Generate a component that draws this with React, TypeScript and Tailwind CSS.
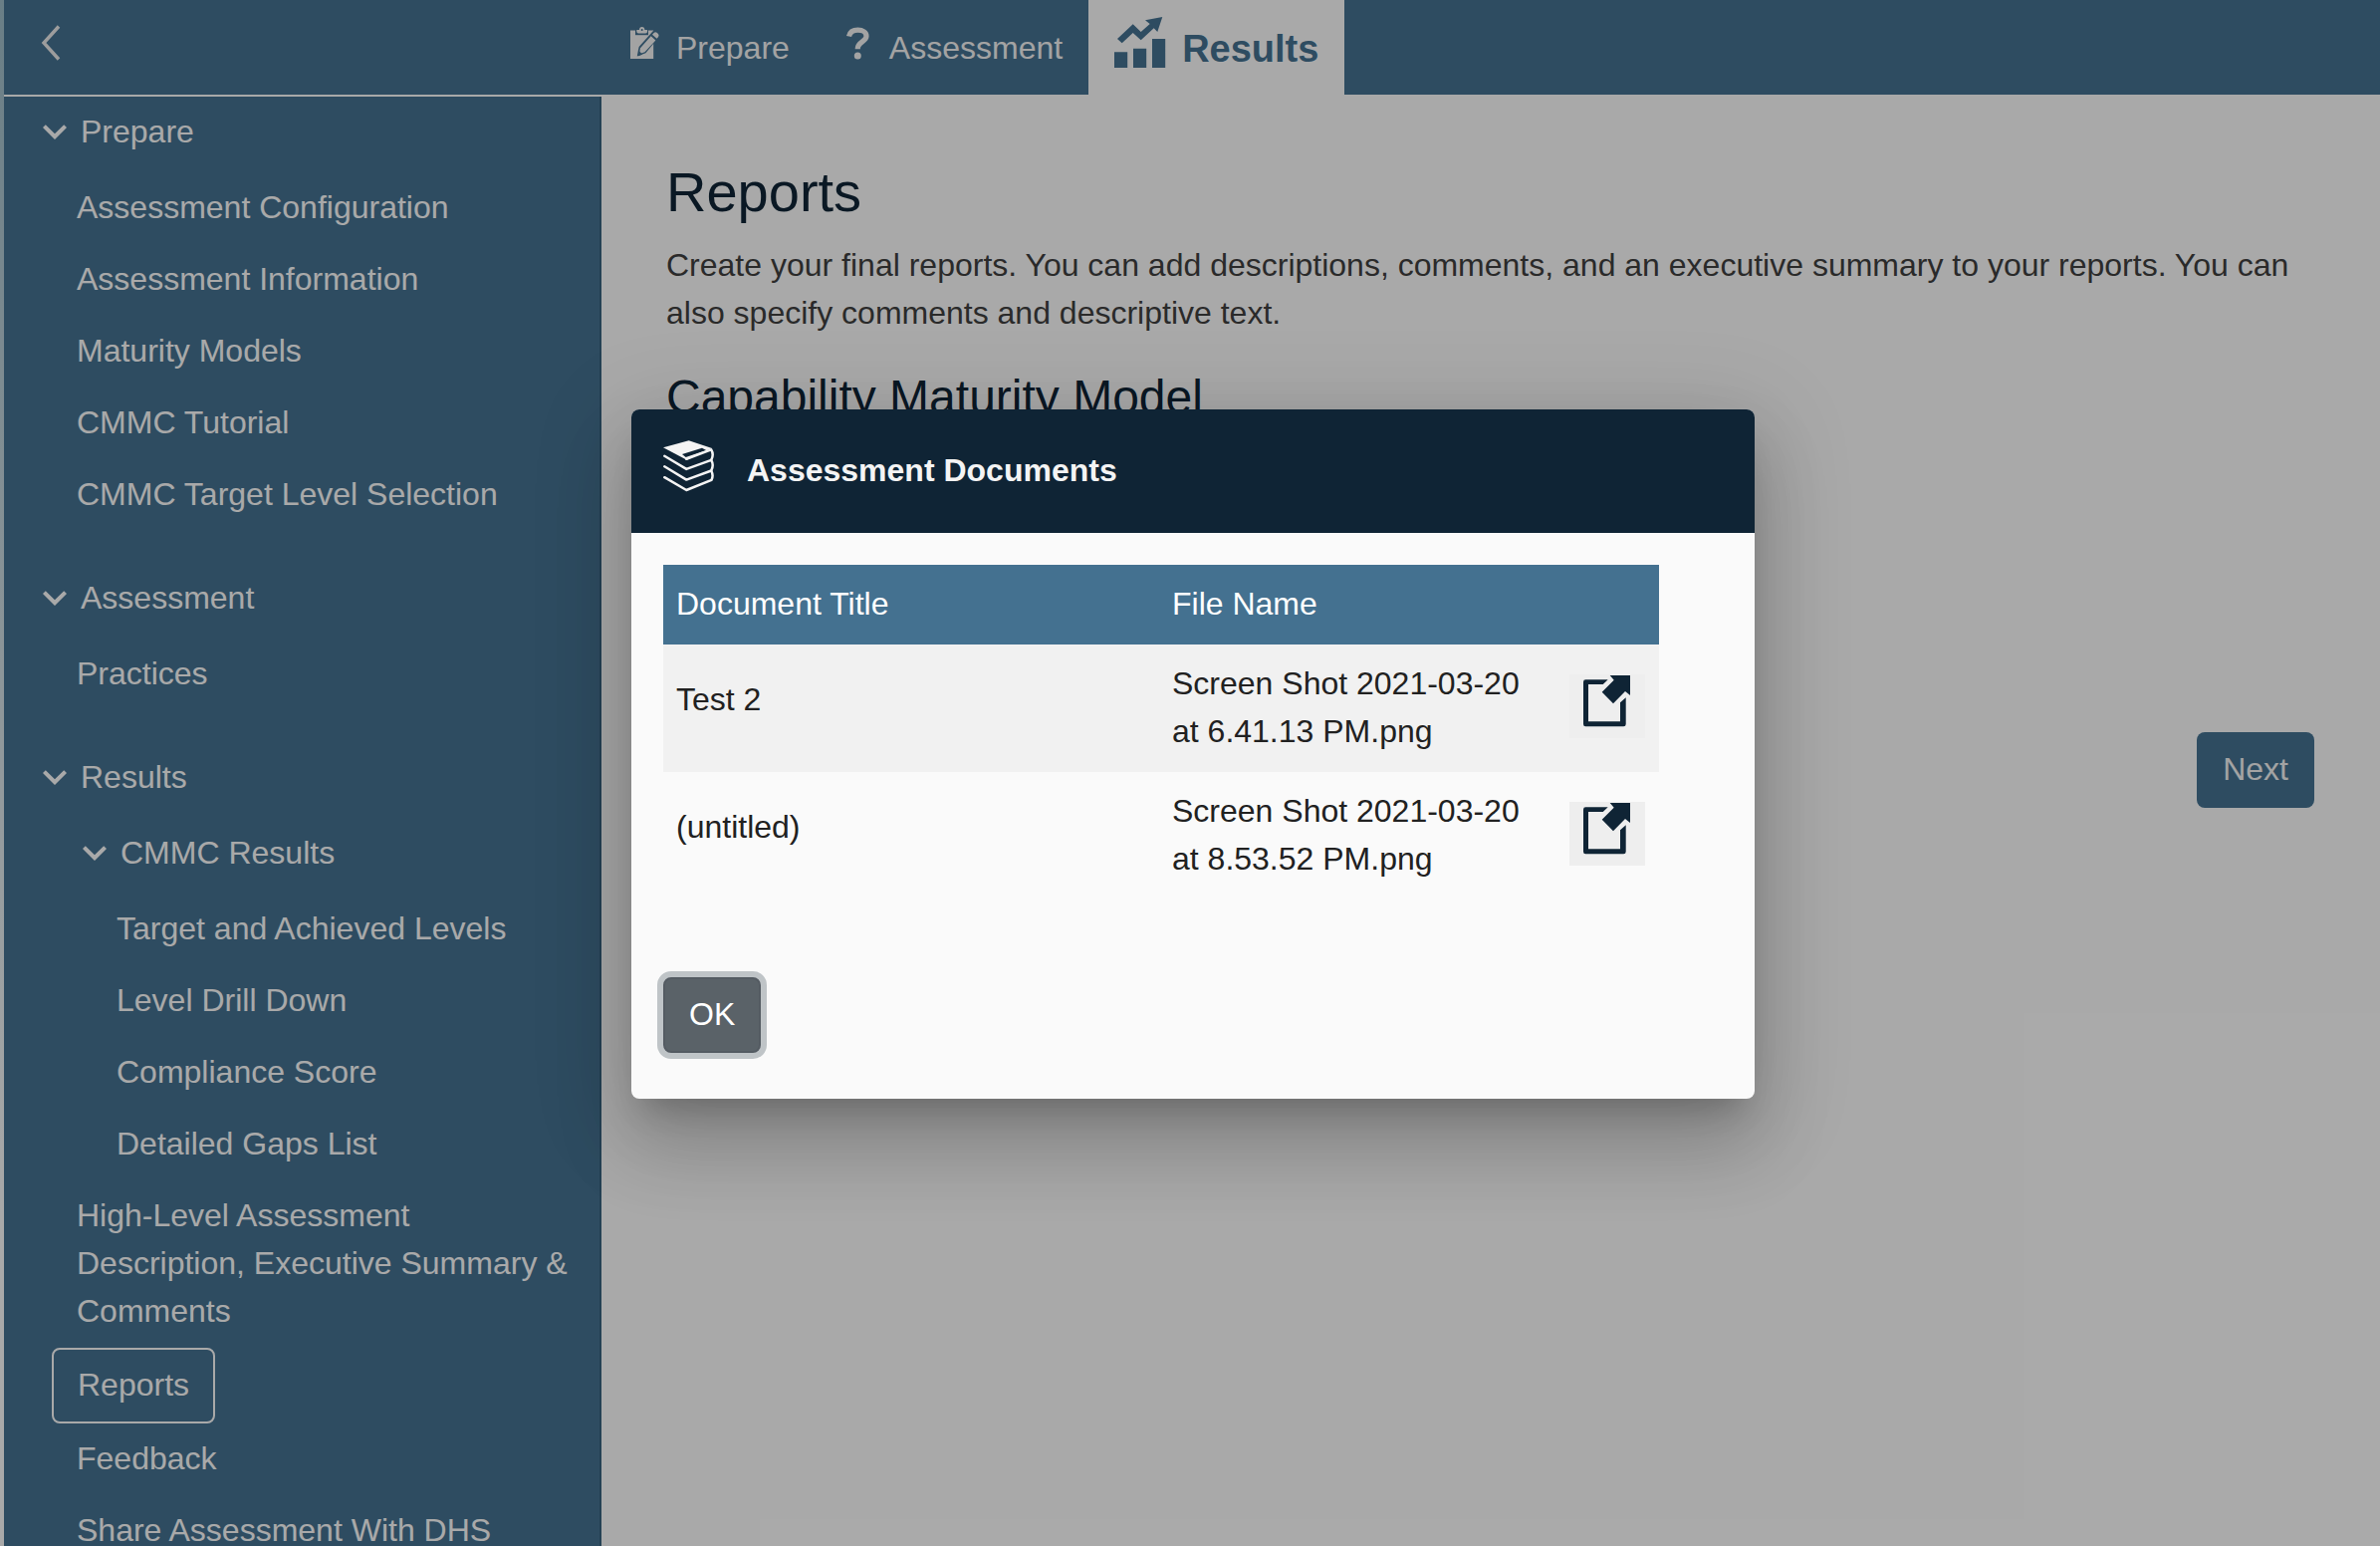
import type { ReactNode } from "react";

function BackIcon() {
  return (
    <svg className="h-9 w-6" viewBox="0 0 24 36" fill="none" stroke="currentColor" strokeWidth="3.4">
      <path d="M21 1.5 6 18 21 34.500" />
    </svg>
  );
}

function ChevronIcon() {
  return (
    <svg className="size-12 shrink-0" viewBox="0 0 24 24" fill="currentColor">
      <path d="M16.590 8.590 12 13.170 7.410 8.590 6 10l6 6 6-6z" />
    </svg>
  );
}

function ClipboardIcon() {
  return (
    <svg className="h-[33px] w-[30px]" viewBox="0 0 30 33">
      <path d="M0 3.500H23.200V32H0z" fill="currentColor" />
      <path d="M5 2h13v6.200H5z" fill="#447190" />
      <path d="M6.300 3H9a2.700 3 0 0 1 5.400 0h2.700v1.600q0 2-2 2H8.300q-2 0-2-2z" fill="currentColor" />
      <circle cx="11.700" cy="2.900" r="1" fill="#447190" />
      <path d="M6.800 29.500 8.600 20 22.500 4.500q2-2 4.600-.2l1.500 1.500q2 2 .2 4.200L15.400 26.200z" fill="#447190" />
      <path d="M8.800 27.300 10 21.200 20.700 9.200l4.700 4.200L14.500 25.200zM22 7.700l1.600-1.800q1.500-1.300 3-.2l1.400 1.300q1.200 1.400.1 2.900l-1.500 1.800z" fill="currentColor" />
      <path d="M8 28.800l1-4 2.700 2.600z" fill="#447190" stroke="#447190" strokeWidth="0.800" />
    </svg>
  );
}

function QuestionIcon() {
  return (
    <svg className="h-[33px] w-8" viewBox="0 0 32 33" fill="none">
      <path
        d="M7.500 9.500C8.500 5 12 3.200 16.500 3.200c5 0 8.500 2.300 8.500 6 0 5.500-8.700 6-8.700 12.300v.7"
        stroke="currentColor"
        strokeWidth="5.200"
      />
      <circle cx="16.300" cy="29" r="3.500" fill="currentColor" />
    </svg>
  );
}

function ChartIcon() {
  return (
    <svg className="size-[52px]" viewBox="0 0 52 52" fill="currentColor">
      <path d="M0 35.300h13.200V51H0zM19 31.800h13.200V51H19zM38 22h13.200v29H38z" />
      <path d="M3 22 18.700 7.300l8 7.700 9-8L31 3.300 48.300 0l-5 15-3.600-3.700-13 12L18.700 16l-11 10.300z" />
    </svg>
  );
}

function BooksIcon() {
  return (
    <svg className="size-[52px]" viewBox="0 0 52 52" fill="none" stroke="currentColor" strokeWidth="2.500" strokeLinecap="round" strokeLinejoin="round">
      <path d="M0 7.200 25.700.3 49 8 23.700 19.700z" fill="currentColor" stroke="none" />
      <path d="m19 14 3.700 3 20.500-7-4.200-2.300z" fill="#0f2435" stroke="none" />
      <path d="M23.300 18.800 48.200 9.300q3 5 0 10.600l-24.900 9L1.300 15.800" />
      <path d="M48.200 19.900q3 5 0 10.600l-24.900 9.100L1.300 26.300" />
      <path d="M48.200 30.500q2.600 5 .3 9.300L23.300 50 1.300 37.200" />
    </svg>
  );
}

function OpenIcon() {
  return (
    <svg className="h-[52px] w-12" viewBox="0 0 48 52" fill="currentColor">
      <path d="M24.700 4.300H2.300Q0 4.300 0 6.700V49q0 2.300 2.300 2.300h38Q42.700 51.300 42.700 49V22.300L37 27.200v19.100H5V9h14.700z" />
      <path d="M26.700 0H47v20l-5-4-12 12.300-11.300-11.600 12-12z" />
    </svg>
  );
}

function Tab({ icon, label }: { icon: ReactNode; label: string }) {
  return (
    <button className="flex h-[95px] items-center gap-4 px-[26px] text-[#f0f0f0]">
      <span className="pb-2">{icon}</span>
      {label}
    </button>
  );
}

function GroupHead({ label }: { label: string }) {
  return (
    <button className="flex items-center gap-0.5 pt-[11px] pb-[17px] pl-[27px] text-left">
      <ChevronIcon />
      {label}
    </button>
  );
}

function Item({ label }: { label: string }) {
  return (
    <a href="#" className="block pt-[11px] pr-4 pb-[13px] pl-[73px]">
      {label}
    </a>
  );
}

const prepareItems = [
  "Assessment Configuration",
  "Assessment Information",
  "Maturity Models",
  "CMMC Tutorial",
  "CMMC Target Level Selection",
];
const cmmcItems = ["Target and Achieved Levels", "Level Drill Down", "Compliance Score", "Detailed Gaps List"];

const documents = [
  { title: "Test 2", file: "Screen Shot 2021-03-20 at 6.41.13 PM.png" },
  { title: "(untitled)", file: "Screen Shot 2021-03-20 at 8.53.52 PM.png" },
];

function Sidebar() {
  return (
    <nav className="mt-0.5 w-[600px] shrink-0 overflow-hidden border-r-2 border-[#37607d] bg-[#447190]">
      <GroupHead label="Prepare" />
      {prepareItems.map((label) => (
        <Item key={label} label={label} />
      ))}
      <div className="mt-8">
        <GroupHead label="Assessment" />
        <Item label="Practices" />
      </div>
      <div className="mt-8">
        <GroupHead label="Results" />
        <div className="pl-10">
          <GroupHead label="CMMC Results" />
          {cmmcItems.map((label) => (
            <Item key={label} label={label} />
          ))}
        </div>
        <Item label="High-Level Assessment Description, Executive Summary & Comments" />
        <a
          href="#"
          aria-current="page"
          className="ml-12 block w-fit rounded-lg border-2 border-[#fafafa] px-6 pt-[11px] pb-[13px]"
        >
          Reports
        </a>
        <Item label="Feedback" />
        <Item label="Share Assessment With DHS" />
      </div>
    </nav>
  );
}

function DocumentsDialog() {
  return (
    <div
      role="dialog"
      aria-modal="true"
      aria-labelledby="dialog-title"
      className="w-full max-w-[1128px] overflow-hidden rounded-lg bg-[#fafafa] text-[#212121] shadow-[0_22px_30px_-14px_rgba(0,0,0,0.2),0_48px_76px_6px_rgba(0,0,0,0.14),0_18px_92px_16px_rgba(0,0,0,0.12)]"
    >
      <div className="flex h-[124px] items-center gap-8 bg-[#0f2435] px-8 pb-0.5 text-[#f4f4f4]">
        <span className="pb-2">
          <BooksIcon />
        </span>
        <h2 id="dialog-title" className="font-bold">
          Assessment Documents
        </h2>
      </div>
      <div className="px-8 pt-8 pb-[46px]">
        <table className="w-[1000px] table-fixed border-collapse text-left">
          <colgroup>
            <col />
            <col className="w-[399px]" />
            <col className="w-[103px]" />
          </colgroup>
          <thead>
            <tr className="h-20 bg-[#447190] text-white">
              <th className="px-[13px] pb-0.5 font-normal">Document Title</th>
              <th className="px-[13px] pb-0.5 font-normal">File Name</th>
              <th aria-label="Open" />
            </tr>
          </thead>
          <tbody>
            {documents.map((doc) => (
              <tr key={doc.title} className="h-32 odd:bg-[#f1f1f1]">
                <td className="px-[13px] pb-[18px]">{doc.title}</td>
                <td className="px-[13px] pb-0.5">{doc.file}</td>
                <td className="px-[13px] pb-1">
                  <button
                    aria-label={"Open " + doc.file}
                    className="flex h-16 w-[76px] justify-center bg-[#eeeeee] pt-px text-[#0f2435]"
                  >
                    <OpenIcon />
                  </button>
                </td>
              </tr>
            ))}
          </tbody>
        </table>
        <button className="mt-[78px] block rounded-lg border-2 border-[#545b62] bg-[#5a6268] px-6 pt-[11px] pb-[13px] text-white ring-6 ring-[#bfc4c7]">
          OK
        </button>
      </div>
    </div>
  );
}

export default function App() {
  return (
    <div className="relative flex h-screen overflow-hidden bg-[#fafafa] font-['Liberation_Sans',Arial,sans-serif] text-[32px] leading-[48px] text-[#fafafa]">
      <div className="w-1 shrink-0 bg-linear-to-b from-[#9cbac6] to-[#fafafa] to-80%" />
      <div className="flex min-w-0 grow flex-col">
        <header className="flex h-[95px] shrink-0 items-start bg-[#447190]">
          <div className="w-[603px] shrink-0 pt-[25px] pl-[34px]">
            <button aria-label="Back" className="block text-[#e8e8e8]">
              <BackIcon />
            </button>
          </div>
          <Tab icon={<ClipboardIcon />} label="Prepare" />
          <Tab icon={<QuestionIcon />} label="Assessment" />
          <button className="flex h-[95px] items-center gap-4 bg-[#fafafa] px-[26px] pt-[3px] text-[38px] font-bold text-[#447190]">
            <span className="pb-3">
              <ChartIcon />
            </span>
            Results
          </button>
        </header>
        <div className="flex min-h-0 grow">
          <Sidebar />
          <main className="min-w-0 grow pt-16 pr-[66px] pl-[65px] text-[#3f3f3f]">
            <h1 className="text-[56px] leading-[68px] text-[#0f2435]">Reports</h1>
            <p className="mt-[15px]">
              Create your final reports. You can add descriptions, comments, and an executive summary to your reports.
              You can also specify comments and descriptive text.
            </p>
            <h2 className="mt-8 text-[48px] leading-[58px] text-[#0f2435]">Capability Maturity Model</h2>
            <div className="mt-[307px] flex justify-end">
              <button className="rounded-lg bg-[#447190] px-[26px] pt-[13px] pb-[15px] text-[#f0f0f0]">Next</button>
            </div>
          </main>
        </div>
      </div>
      <div className="absolute inset-0 flex items-center justify-center bg-black/32 pb-[38px] pl-1.5">
        <DocumentsDialog />
      </div>
    </div>
  );
}
